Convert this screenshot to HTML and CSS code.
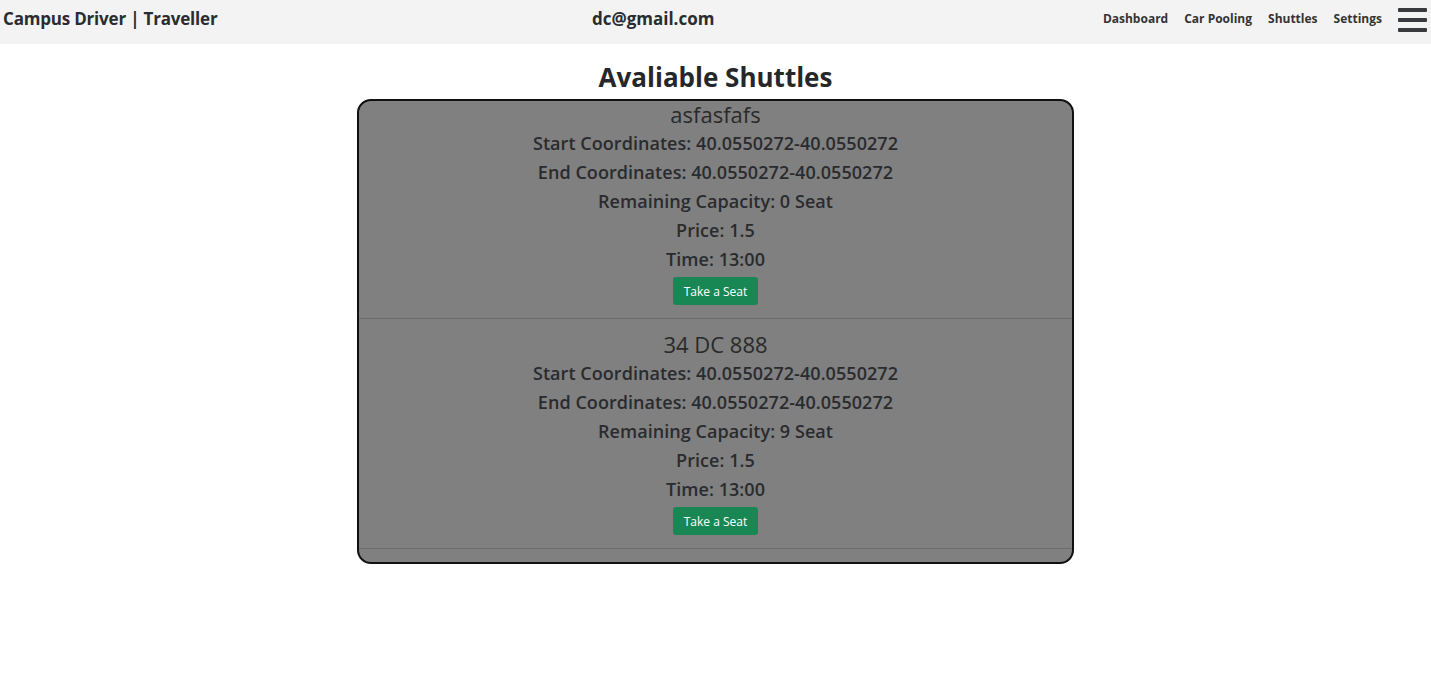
FILE: index.html
```html
<!DOCTYPE html>
<html>
<head>
<meta charset="utf-8">
<link rel="stylesheet" href="styles.css">
</head>
<body>
<nav class="navbar">
  <div class="brand">Campus Driver | Traveller</div>
  <div class="email">dc@gmail.com</div>
  <div class="links">
    <a class="link">Dashboard</a>
    <a class="link">Car Pooling</a>
    <a class="link">Shuttles</a>
    <a class="link">Settings</a>
    <span class="burger"><span></span><span></span><span></span></span>
  </div>
</nav>
<main class="main">
  <h2 class="title">Avaliable Shuttles</h2>
  <section class="card">
    <div class="item">
      <div class="name">asfasfafs</div>
      <p class="line">Start Coordinates: 40.0550272-40.0550272</p>
      <p class="line">End Coordinates: 40.0550272-40.0550272</p>
      <p class="line">Remaining Capacity: 0 Seat</p>
      <p class="line">Price: 1.5</p>
      <p class="line">Time: 13:00</p>
      <button class="btn">Take a Seat</button>
      <hr class="sep">
    </div>
    <div class="item">
      <div class="name">34 DC 888</div>
      <p class="line">Start Coordinates: 40.0550272-40.0550272</p>
      <p class="line">End Coordinates: 40.0550272-40.0550272</p>
      <p class="line">Remaining Capacity: 9 Seat</p>
      <p class="line">Price: 1.5</p>
      <p class="line">Time: 13:00</p>
      <button class="btn">Take a Seat</button>
      <hr class="sep">
    </div>
  </section>
</main>
</body>
</html>
```

FILE: styles.css
```css
* { box-sizing: border-box; }
html, body { margin: 0; padding: 0; background: #fff; }
body {
  font-family: "Open Sans", "Noto Sans", sans-serif;
  color: #212529;
}
.navbar {
  height: 44px;
  background: #f3f3f3;
  display: flex;
  align-items: center;
  justify-content: space-between;
  padding: 0 4px 8px 3px;
}
.brand {
  font-size: 17px;
  font-weight: 700;
  color: #2a2c30;
  letter-spacing: -0.2px;
}
.email {
  font-size: 17px;
  font-weight: 700;
  color: #2a2c30;
  margin-right: 14px;
}
.links {
  display: flex;
  align-items: center;
  gap: 16px;
}
.link {
  font-size: 12px;
  font-weight: 700;
  color: #333;
  letter-spacing: 0;
}
.burger {
  display: flex;
  flex-direction: column;
  gap: 6px;
  width: 29px;
  margin-top: 3px;
}
.burger span {
  display: block;
  height: 4px;
  background: #383a3e;
  border-radius: 1px;
}
.main {
  display: flex;
  flex-direction: column;
  align-items: center;
}
.title {
  margin: 17px 0 0;
  font-size: 26px;
  line-height: 32px;
  font-weight: 700;
  color: #25272b;
  height: 38px;
}
.card {
  width: 717px;
  background: #808080;
  border: 2px solid #111;
  border-radius: 14px;
  padding-top: 1px;
  text-align: center;
  overflow: hidden;
}
.item { display: flex; flex-direction: column; align-items: center; }
.name {
  font-size: 22px;
  line-height: 24px;
  margin-bottom: 3px;
  font-weight: 500;
  color: #2a2a2a;
}
.line {
  margin: 0;
  font-size: 18px;
  line-height: 29px;
  font-weight: 600;
  color: #2a2b2e;
  letter-spacing: 0.05px;
}
.btn {
  margin-top: 3px;
  height: 28px;
  padding: 0 11px;
  background: #198754;
  border: 0;
  border-radius: 3px;
  color: #fff;
  font-family: inherit;
  font-size: 12px;
}
.sep {
  align-self: stretch;
  margin: 13px 0;
  border: 0;
  border-top: 1px solid #6c6c6c;
}
```
